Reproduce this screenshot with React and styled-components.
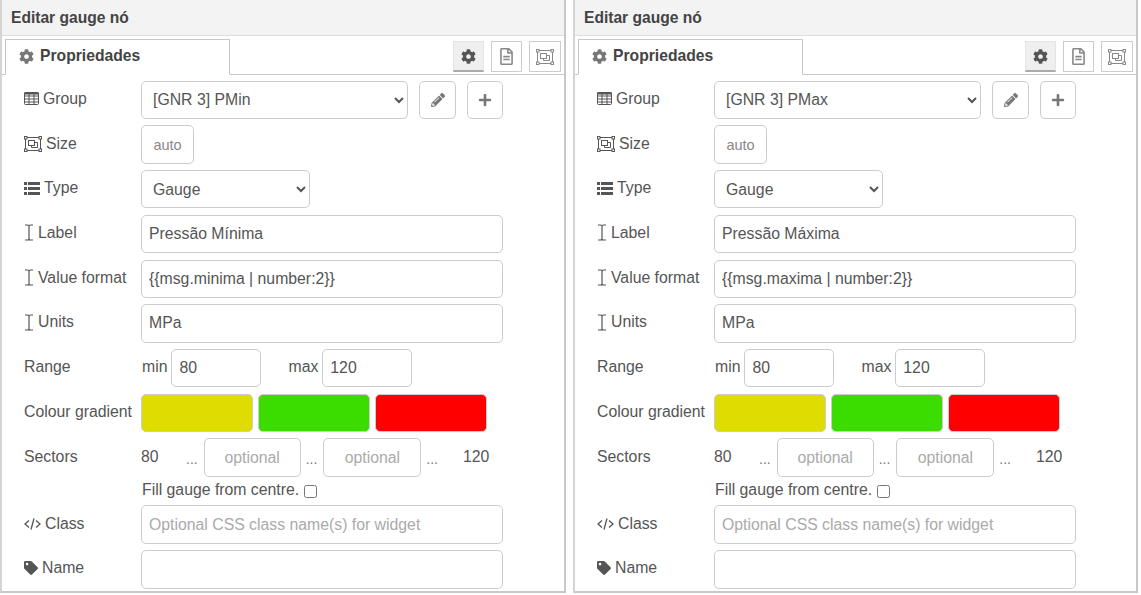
import React from "react";
import styled, { createGlobalStyle } from "styled-components";
import { FaCog, FaPencilAlt, FaPlus, FaRegFileAlt, FaTag } from "react-icons/fa";

const GlobalStyle = createGlobalStyle`
  html, body {
    margin: 0;
    background: #fff;
    overflow: hidden;
  }
  body, input, select {
    font-family: "Liberation Sans", Arial, sans-serif;
  }
`;

const Page = styled.div`
  display: flex;
  gap: 7px;
  width: 1141px;
  height: 595px;
  overflow: hidden;
`;
const Panel = styled.section`
  box-sizing: border-box;
  width: ${(p) => p.$width}px;
  height: 593px;
  border-left: 2px solid #d4d4d4;
  border-right: 2px solid #c8c8c8;
  border-bottom: 2px solid #c8c8c8;
  color: #555;
  font-size: 15.8px;
`;
const Header = styled.h2`
  box-sizing: border-box;
  height: 36px;
  margin: 0;
  padding: 9px 0 0 9px;
  background: #f3f3f3;
  border-bottom: 1px solid #ddd;
  color: #444;
  font-size: 15.6px;
  font-weight: bold;
  line-height: 18px;
`;
const TabBar = styled.div`
  box-sizing: border-box;
  display: flex;
  align-items: flex-end;
  height: 39px;
  padding: 0 3px 0 3px;
  border-bottom: 1px solid #c8c8c8;
`;
const Tab = styled.div`
  box-sizing: border-box;
  display: flex;
  align-items: center;
  gap: 6px;
  width: 225px;
  height: 36px;
  margin-bottom: -1px;
  padding: 0 0 2px 13px;
  background: #fff;
  border: 1px solid #c8c8c8;
  border-bottom-color: #fff;
  color: #444;
  font-size: 15.7px;
  font-weight: bold;
  svg {
    color: #777;
    font-size: 15px;
  }
`;
const TabTools = styled.div`
  display: flex;
  gap: 7px;
  margin: 0 0 2px auto;
`;
const TabTool = styled.div`
  box-sizing: border-box;
  display: flex;
  align-items: center;
  justify-content: center;
  width: ${(p) => p.$width || 31}px;
  height: 31px;
  background: ${(p) => (p.$active ? "#efefef" : "#fff")};
  border: 1px solid ${(p) => (p.$active ? "#e4e4e4" : "#ccc")};
  border-bottom: ${(p) => (p.$active ? "2px solid #aaa" : "1px solid #ccc")};
  color: ${(p) => (p.$active ? "#555" : "#888")};
  font-size: 15px;
`;
const Form = styled.div`
  display: flex;
  flex-direction: column;
  gap: 6.33px;
  padding: 5.65px 0 0 22px;
`;
const Row = styled.div`
  display: flex;
  align-items: center;
  height: ${(p) => p.$height || 38.4}px;
`;
const Label = styled.label`
  display: flex;
  align-items: center;
  flex: none;
  gap: 4px;
  width: 117px;
  margin-top: -2px;
  svg {
    flex: none;
    color: #555;
  }
`;
const Select = styled.select`
  box-sizing: border-box;
  width: ${(p) => p.$width}px;
  height: 100%;
  padding: 0 4px 0 7px;
  background: #fff;
  border: 1px solid #ccc;
  border-radius: 5px;
  color: #555;
  font-size: 15.8px;
`;
const Input = styled.input`
  box-sizing: border-box;
  width: ${(p) => p.$width || 362}px;
  height: 100%;
  margin-left: ${(p) => p.$left || 0}px;
  padding: 0 ${(p) => (p.$center ? 0 : 7)}px;
  background: #fff;
  border: 1px solid #ccc;
  border-radius: 5px;
  color: #555;
  font-size: 15.8px;
  text-align: ${(p) => (p.$center ? "center" : "left")};
  &::placeholder {
    color: #aaa;
    opacity: 1;
  }
`;
const AutoInput = styled(Input)`
  color: #888;
  font-size: 14.5px;
`;
const IconButton = styled.div`
  box-sizing: border-box;
  display: flex;
  align-items: center;
  justify-content: center;
  width: ${(p) => p.$width || 37}px;
  height: 100%;
  margin-left: 11px;
  border: 1px solid #ccc;
  border-radius: 5px;
  color: #777;
  font-size: 14px;
`;
const Text = styled.span`
  flex: none;
  width: ${(p) => (p.$width ? `${p.$width}px` : "auto")};
  margin-left: ${(p) => p.$left || 0}px;
  margin-top: -2px;
`;
const Dots = styled.span`
  flex: none;
  margin-left: ${(p) => p.$left || 0}px;
  margin-top: 2px;
  color: #777;
  font-size: 14px;
`;
const Swatch = styled.div`
  box-sizing: border-box;
  width: 112px;
  height: 100%;
  margin-right: 5px;
  background: ${(p) => p.$color};
  border: 1px solid #ccc;
  border-radius: 5px;
`;
const Check = styled.input`
  width: 13px;
  height: 13px;
  margin: 0 0 0 5px;
`;

const TableIcon = () => (
  <svg width="15" height="13" viewBox="0 0 15 13" fill="none" stroke="currentColor">
    <rect x="0.5" y="0.5" width="14" height="12" rx="1" />
    <path d="M0 4h15M0 7h15M0 10h15M5 1v12M10 1v12" />
    <path d="M0 1.5h15" strokeWidth="2" />
  </svg>
);

const SizeIcon = () => (
  <svg width="18" height="16" viewBox="0 0 18 16" fill="none" stroke="currentColor">
    <rect x="1.5" y="1.5" width="15" height="13" />
    <rect x="4.5" y="4.5" width="6" height="5" />
    <path d="M10.5 6.5h3v5h-6v-2" />
    <g fill="#fff">
      <rect x="0.5" y="0.5" width="2.5" height="2.5" />
      <rect x="15" y="0.5" width="2.5" height="2.5" />
      <rect x="0.5" y="13" width="2.5" height="2.5" />
      <rect x="15" y="13" width="2.5" height="2.5" />
    </g>
  </svg>
);

const ListIcon = () => (
  <svg width="16" height="13" viewBox="0 0 16 13" fill="currentColor">
    <path d="M0 0h3v3H0zM4 0h12v3H4zM0 5h3v3H0zM4 5h12v3H4zM0 10h3v3H0zM4 10h12v3H4z" />
  </svg>
);

const CursorIcon = () => (
  <svg width="10" height="17" viewBox="0 0 10 17" fill="none" stroke="currentColor" strokeWidth="1.2">
    <path d="M1 1h2.5c1 0 1.5.5 1.5 1.2 0-.7.5-1.2 1.5-1.2H9M5 2.2v12.6M1 16h2.5c1 0 1.5-.5 1.5-1.2 0 .7.5 1.2 1.5 1.2H9" />
  </svg>
);

const CodeIcon = () => (
  <svg width="17" height="14" viewBox="0 0 17 14" fill="none" stroke="currentColor" strokeWidth="1.3">
    <path d="M5 3.5 1 7l4 3.5M12 3.5 16 7l-4 3.5M10 1.5 7 12.5" />
  </svg>
);

const Field = ({ icon, label, children, height }) => (
  <Row $height={height}>
    <Label>
      {icon}
      {label}
    </Label>
    {children}
  </Row>
);

const GaugeEditor = ({ width, group, title, format }) => (
  <Panel $width={width}>
    <Header>Editar gauge nó</Header>
    <TabBar>
      <Tab>
        <FaCog />
        Propriedades
      </Tab>
      <TabTools>
        <TabTool $active>
          <FaCog />
        </TabTool>
        <TabTool>
          <FaRegFileAlt size={17} />
        </TabTool>
        <TabTool $width={32}>
          <SizeIcon />
        </TabTool>
      </TabTools>
    </TabBar>
    <Form>
      <Field icon={<TableIcon />} label="Group">
        <Select $width={267} defaultValue={group}>
          <option>{group}</option>
        </Select>
        <IconButton>
          <FaPencilAlt />
        </IconButton>
        <IconButton $width={36}>
          <FaPlus />
        </IconButton>
      </Field>
      <Field icon={<SizeIcon />} label="Size">
        <AutoInput $width={53} $center readOnly value="auto" />
      </Field>
      <Field icon={<ListIcon />} label="Type">
        <Select $width={169} defaultValue="Gauge">
          <option>Gauge</option>
        </Select>
      </Field>
      <Field icon={<CursorIcon />} label="Label">
        <Input readOnly value={title} />
      </Field>
      <Field icon={<CursorIcon />} label="Value format">
        <Input readOnly value={format} />
      </Field>
      <Field icon={<CursorIcon />} label="Units">
        <Input readOnly value="MPa" />
      </Field>
      <Field label="Range">
        <Text $left={1}>min</Text>
        <Input $width={90} $left={4} readOnly value="80" />
        <Text $left={27}>max</Text>
        <Input $width={90} $left={4} readOnly value="120" />
      </Field>
      <Field label="Colour gradient">
        <Swatch $color="#dedc00" />
        <Swatch $color="#3bdd00" />
        <Swatch $color="#ff0000" />
      </Field>
      <Field label="Sectors">
        <Text $width={45}>80</Text>
        <Dots>...</Dots>
        <Input $width={97} $left={6} $center placeholder="optional" readOnly />
        <Dots $left={5}>...</Dots>
        <Input $width={98} $left={6} $center placeholder="optional" readOnly />
        <Dots $left={5}>...</Dots>
        <Text $left={25}>120</Text>
      </Field>
      <Row $height={16}>
        <Label />
        <Text $left={1}>Fill gauge from centre.</Text>
        <Check type="checkbox" />
      </Row>
      <Field icon={<CodeIcon />} label="Class">
        <Input placeholder="Optional CSS class name(s) for widget" readOnly />
      </Field>
      <Field icon={<FaTag size={14} />} label="Name">
        <Input readOnly />
      </Field>
    </Form>
  </Panel>
);

export default function App() {
  return (
    <Page>
      <GlobalStyle />
      <GaugeEditor
        width={566}
        group="[GNR 3] PMin"
        title="Pressão Mínima"
        format="{{msg.minima | number:2}}"
      />
      <GaugeEditor
        width={565}
        group="[GNR 3] PMax"
        title="Pressão Máxima"
        format="{{msg.maxima | number:2}}"
      />
    </Page>
  );
}
